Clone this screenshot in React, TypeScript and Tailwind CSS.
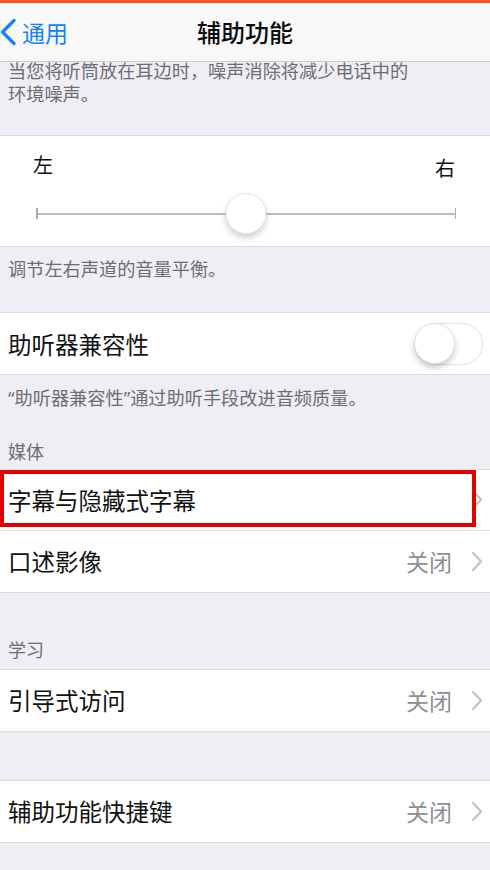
import React from "react";

const FONT = { fontFamily: '"Noto Sans CJK SC", "Noto Sans", sans-serif' };
const LATIN_FIRST = { fontFamily: '"Noto Sans", "Noto Sans CJK SC", sans-serif' };

function Chevron() {
  return (
    <svg width="12" height="21" viewBox="0 0 12 21" fill="none">
      <path d="M2 2 L10 10.5 L2 19" stroke="#c4c4c9" strokeWidth="2.4" strokeLinecap="round" strokeLinejoin="round" />
    </svg>
  );
}

function Row({ label, value, chevron = true, children }: { label: string; value?: string; chevron?: boolean; children?: React.ReactNode }) {
  return (
    <div className="relative h-[61px] flex items-center pl-[8px] pr-[7px] bg-white">
      <span className="flex-1 text-[23.5px] leading-[30px] text-[#111]">{label}</span>
      {value && <span className="text-[23px] leading-[30px] text-[#8e8e93] mr-[19px]">{value}</span>}
      {chevron && <Chevron />}
      {children}
    </div>
  );
}

export default function App() {
  return (
    <div className="w-[490px] h-[870px] bg-[#efeef5] overflow-hidden flex flex-col" style={FONT}>
      <header className="relative z-10 h-[62px] shrink-0 bg-[#f8f8f9] border-t-[3px] border-t-[#f2581f] border-b border-b-[#cdccd1] grid grid-cols-[1fr_auto_1fr] items-center">
        <div className="flex items-center">
          <svg width="16" height="28" viewBox="0 0 16 28" fill="none">
            <path d="M14 2.5 L2.5 14 L14 25.5" stroke="#1682f5" strokeWidth="3.2" strokeLinecap="round" strokeLinejoin="round" />
          </svg>
          <span className="ml-[6px] text-[23px] leading-[30px] text-[#1682f5]">通用</span>
        </div>
        <div className="text-[24px] leading-[30px] font-medium text-[#0a0a0a]">辅助功能</div>
        <div />
      </header>

      <main className="flex-1 overflow-hidden">
        <p className="mt-[-3.5px] px-[8px] text-[18.2px] leading-[23px] text-[#6d6d72]">
          当您将听筒放在耳边时，噪声消除将减少电话中的
          <br />
          环境噪声。
        </p>

        <section className="mt-[30.5px] bg-white border-y border-[#dcdbe0]">
          <div className="pt-[17px] flex justify-between pl-[33px] pr-[35px] text-[20px] leading-[24px] text-[#111]">
            <span>左</span>
            <span className="translate-y-[3px]">右</span>
          </div>
          <div className="relative mt-[16px] ml-[36px] mr-[34px] h-[41px] flex items-center">
            <div className="w-[1.5px] h-[11px] bg-[#a9a9ae]" />
            <div className="flex-1 h-[2px] bg-[#bbbbc0]" />
            <div className="w-[1.5px] h-[11px] bg-[#a9a9ae]" />
            <div className="absolute left-1/2 top-0 -translate-x-1/2 w-[41px] h-[41px] rounded-full bg-white border border-[#e4e4e8] shadow-[0_4px_6px_rgba(0,0,0,0.18)]" />
          </div>
          <div className="h-[12px]" />
        </section>

        <p className="mt-[9.5px] px-[8px] text-[18.2px] leading-[23px] text-[#6d6d72]">调节左右声道的音量平衡。</p>

        <section className="mt-[32.5px] border-y border-[#dcdbe0]">
          <Row label="助听器兼容性" chevron={false}>
            <div className="relative w-[69px] h-[42px] rounded-full border-[1.5px] border-[#e2e2e6] bg-white">
              <div className="absolute left-[-1px] top-[-1px] w-[41px] h-[41px] rounded-full bg-white border border-[#e0e0e4] shadow-[0_4px_6px_rgba(0,0,0,0.2)]" />
            </div>
          </Row>
        </section>

        <p className="mt-[11.5px] px-[8px] text-[18.2px] leading-[23px] text-[#6d6d72]" style={LATIN_FIRST}>“助听器兼容性”通过助听手段改进音频质量。</p>

        <p className="mt-[30px] px-[8px] text-[18px] leading-[23px] text-[#6d6d72]">媒体</p>

        <section className="mt-[6px] border-y border-[#dcdbe0] divide-y divide-[#dcdbe0]">
          <Row label="字幕与隐藏式字幕">
            <div className="absolute left-0 top-[0px] w-[476px] h-[57px] border-[4px] border-[#e30000]" />
          </Row>
          <Row label="口述影像" value="关闭" />
        </section>

        <p className="mt-[45px] px-[8px] text-[18px] leading-[23px] text-[#6d6d72]">学习</p>

        <section className="mt-[8px] border-y border-[#dcdbe0]">
          <Row label="引导式访问" value="关闭" />
        </section>

        <section className="mt-[48px] border-y border-[#dcdbe0]">
          <Row label="辅助功能快捷键" value="关闭" />
        </section>
      </main>
    </div>
  );
}
